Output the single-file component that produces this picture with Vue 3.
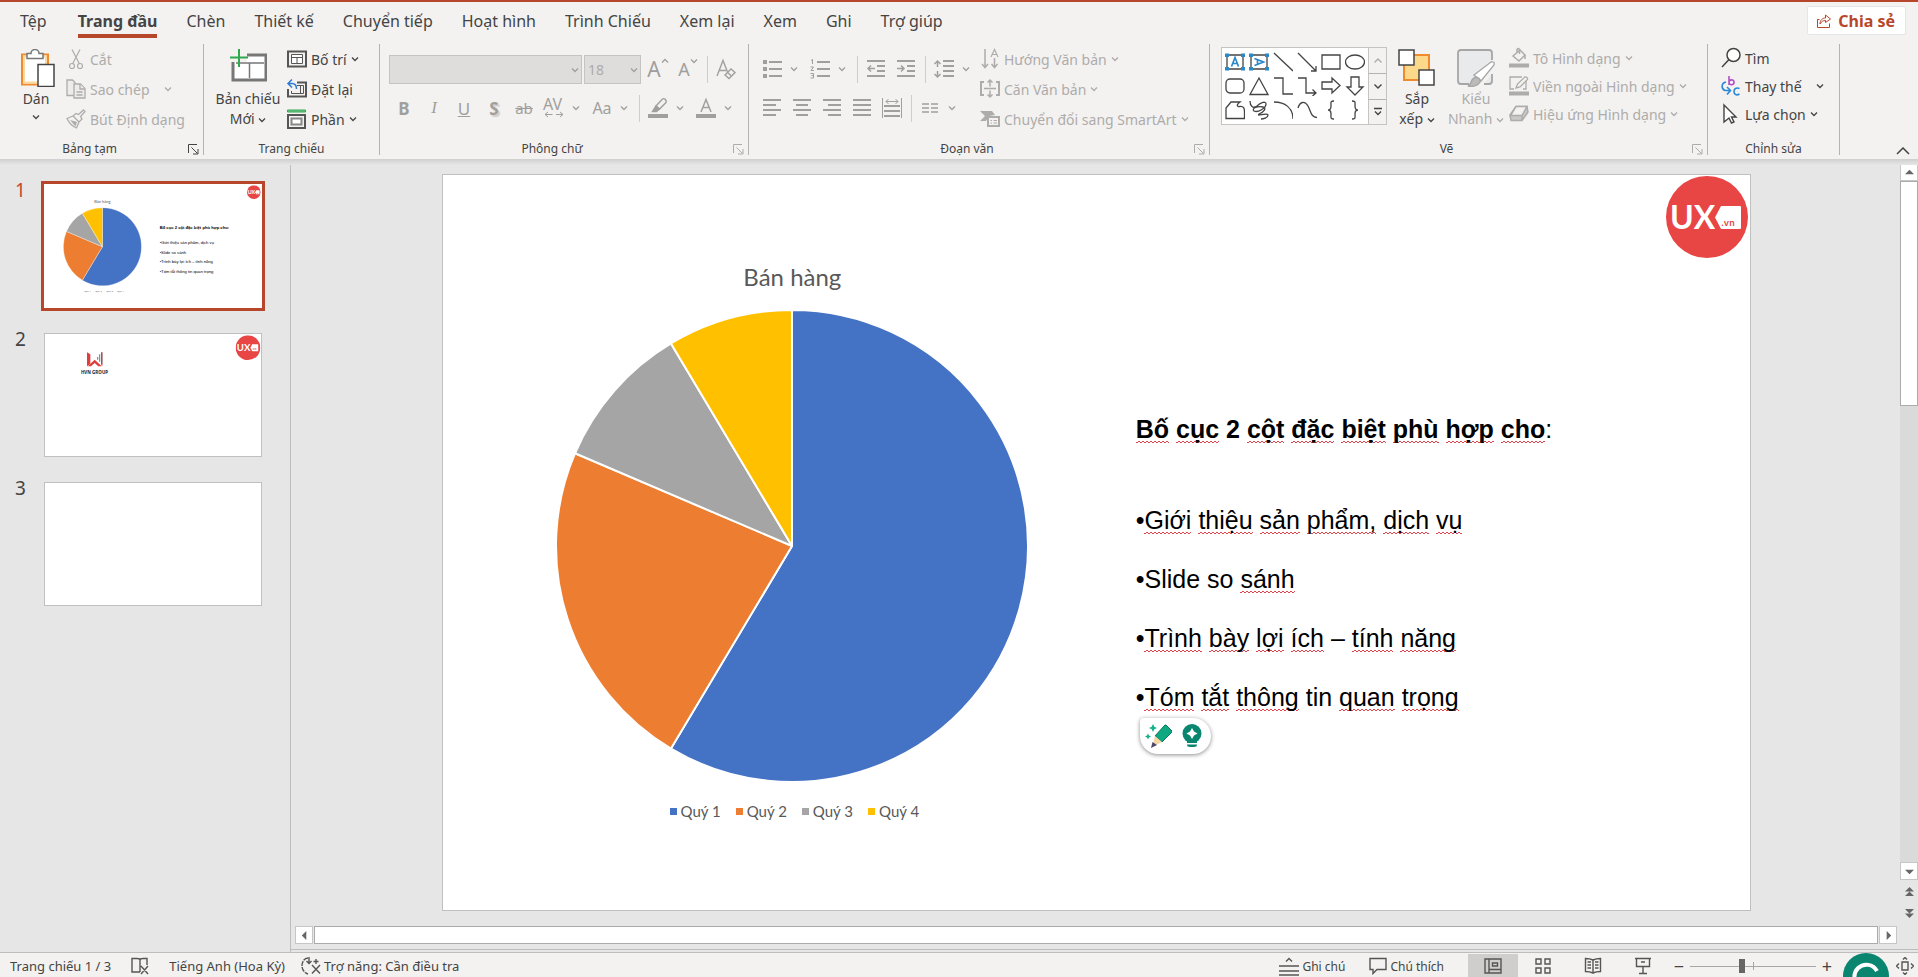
<script setup>
import { h, ref } from 'vue'

const tabs = ['Tệp', 'Trang đầu', 'Chèn', 'Thiết kế', 'Chuyển tiếp', 'Hoạt hình', 'Trình Chiếu', 'Xem lại', 'Xem', 'Ghi', 'Trợ giúp']
const activeTab = ref('Trang đầu')
const currentSlide = ref(1)
const zoom = ref(48)

// chart data
const quarters = [
  { name: 'Quý 1', value: 8.2, color: '#4472c4' },
  { name: 'Quý 2', value: 3.2, color: '#ed7d31' },
  { name: 'Quý 3', value: 1.4, color: '#a5a5a5' },
  { name: 'Quý 4', value: 1.2, color: '#ffc000' }
]

const total = quarters.reduce((sum, q) => sum + q.value, 0)
const point = (share) => {
  const angle = share * 2 * Math.PI
  return `${(236 + 235 * Math.sin(angle)).toFixed(2)} ${(236 - 235 * Math.cos(angle)).toFixed(2)}`
}

let start = 0
const slices = quarters.map((q) => {
  const end = start + q.value / total
  const large = end - start > 0.5 ? 1 : 0
  const d = `M236 236L${point(start)}A235 235 0 ${large} 1 ${point(end)}Z`
  start = end
  return { d, color: q.color }
})

// round badge used on every slide
const UxLogo = (_, { attrs }) => h('svg', { viewBox: '0 0 82 82', ...attrs }, [
  h('circle', { cx: 41, cy: 41, r: 41, fill: '#e84545' }),
  h('text', { x: 4, y: 53, 'font-family': 'Lato, sans-serif', 'font-size': 32, 'font-weight': 700, fill: '#fff' }, 'UX'),
  h('path', { d: 'M55 30H74Q75 30 75 31V52Q75 53 74 53H55L49 41.5Z', fill: '#fff' }),
  h('text', { x: 55, y: 50, 'font-family': 'Inter, sans-serif', 'font-size': 9, 'font-weight': 600, fill: '#e84545' }, '.vn')
])
UxLogo.inheritAttrs = false

// words with bad = true get the spelling mark
const heading = [
  { t: 'Bố', bad: true }, { t: 'cục', bad: true }, { t: '2' }, { t: 'cột', bad: true }, { t: 'đặc', bad: true },
  { t: 'biệt', bad: true }, { t: 'phù', bad: true }, { t: 'hợp', bad: true }, { t: 'cho', bad: true }
]
const bullets = [
  [{ t: 'Giới', bad: true }, { t: 'thiệu', bad: true }, { t: 'sản', bad: true }, { t: 'phẩm,', bad: true }, { t: 'dịch', bad: true }, { t: 'vụ', bad: true }],
  [{ t: 'Slide' }, { t: 'so' }, { t: 'sánh', bad: true }],
  [{ t: 'Trình', bad: true }, { t: 'bày', bad: true }, { t: 'lợi', bad: true }, { t: 'ích', bad: true }, { t: '–' }, { t: 'tính', bad: true }, { t: 'năng', bad: true }],
  [{ t: 'Tóm', bad: true }, { t: 'tắt', bad: true }, { t: 'thông', bad: true }, { t: 'tin' }, { t: 'quan', bad: true }, { t: 'trọng', bad: true }]
]
const plain = (words) => words.map((w) => w.t).join(' ')
</script>

<template>
  <div class="app">
    <!-- shared symbols -->
    <svg class="sprite" aria-hidden="true">
      <symbol id="chev" viewBox="0 0 8 8">
        <path d="M1 2.5L4 5.5L7 2.5" fill="none" stroke="currentColor" stroke-width="1.3" />
      </symbol>
      <symbol id="launch" viewBox="0 0 11 11">
        <path d="M.5 9V.5H9M3.5 3.5L9.5 9.5M10 5V10H5" fill="none" stroke="currentColor" />
      </symbol>
      <symbol id="pie" viewBox="0 0 472 472">
        <path v-for="s in slices" :key="s.color" :d="s.d" :fill="s.color" stroke="#fff" stroke-width="2" stroke-linejoin="round" />
      </symbol>
    </svg>

    <header class="top">
      <nav class="tabs">
        <button v-for="tab in tabs" :key="tab" class="tab" :class="{ active: tab === activeTab }" @click="activeTab = tab">
          <span>{{ tab }}</span>
        </button>
      </nav>
      <button class="share">
        <svg width="16" height="16" viewBox="0 0 16 16" fill="none" stroke="currentColor">
          <path d="M3.500 6.500H1.500V14.500H13.500V10.500M4 11C4 7 6.500 5 9.500 5V2L14.500 6L9.500 9.500V7.500C7 7.500 5.500 8.500 4 11Z" />
        </svg>
        Chia sẻ
      </button>
    </header>

    <div class="ribbon">
      <!-- clipboard -->
      <section class="group clip">
        <div class="body">
          <button class="big paste">
            <svg width="38" height="38" viewBox="0 0 38 38" fill="none">
              <path d="M5 5.500H31V35.500H5Z" fill="#fff" stroke="#ef8b2c" stroke-width="2" />
              <path d="M7 7.500H29V33.500H7Z" stroke="#fbd9a0" stroke-width="2" />
              <path d="M10 9.500V4.500H14C14 2 16 .5 18 .5S22 2 22 4.500H26V9.500Z" fill="#fff" stroke="#777" stroke-width="1.500" />
              <path d="M21 15.500H37V37.500H21Z" fill="#fff" stroke="#444" stroke-width="1.500" />
            </svg>
            <span>Dán</span>
            <svg class="chev"><use href="#chev" /></svg>
          </button>
          <div class="list">
            <button class="item off">
              <svg class="ic" viewBox="0 0 20 20" fill="none" stroke="currentColor" stroke-width="1.200">
                <path d="M6 .5L13.500 15M14 .5L6.500 15" /><circle cx="6" cy="17" r="2.500" /><circle cx="14" cy="17" r="2.500" />
              </svg>Cắt
            </button>
            <button class="item off wide">
              <svg class="ic" viewBox="0 0 20 20" fill="#ececec" stroke="currentColor" stroke-width="1.300">
                <path d="M1 1H6.500L9 3.500V16.500H1Z" /><path d="M8 5H14.500L19 9.500V19H8Z" /><path d="M14 5V10H19M10.500 13H16.500M10.500 16H16.500" />
              </svg>Sao chép
              <svg class="chev"><use href="#chev" /></svg>
            </button>
            <button class="item off">
              <svg class="ic" viewBox="0 0 20 20" fill="none" stroke="currentColor" stroke-width="1.300">
                <path d="M17.500 1L19 2.500L14.500 7.500L16 10L13 13L7 7L10 4.500L12.500 5.500ZM7 7L1 9.500C3 14 6 17 10.500 19L13 13" />
                <path d="M4 11L11 13L9.500 17.500Z" fill="currentColor" stroke="none" />
              </svg>Bút Định dạng
            </button>
          </div>
        </div>
        <footer>Bảng tạm<button class="launch" aria-label="Bảng tạm"><svg><use href="#launch" /></svg></button></footer>
      </section>

      <!-- slides -->
      <section class="group slides">
        <div class="body">
          <button class="big new">
            <svg width="38" height="38" viewBox="0 0 38 38" fill="none">
              <path d="M4 6H37V31H4Z" fill="#fff" stroke="#777" stroke-width="3" />
              <path d="M7 14H35M20.500 14V29" stroke="#777" stroke-width="1.500" />
              <path d="M0 0H18V13H0Z" fill="#f3f2f1" />
              <path d="M10 0V18M1 8.500H19" stroke="#2fa84f" stroke-width="2" />
            </svg>
            <span>Bản chiếu</span>
            <span>Mới <svg class="chev"><use href="#chev" /></svg></span>
          </button>
          <div class="list">
            <button class="item">
              <svg class="ic" viewBox="0 0 20 20" fill="none" stroke="#555">
                <path d="M1 2.500H19V17.500H1Z" stroke-width="2" /><path d="M4.500 5.500H15.500V14.500H4.500ZM4.500 8.500H15.500M10 8.500V14.500" fill="#fff" />
              </svg>Bố trí<svg class="chev"><use href="#chev" /></svg>
            </button>
            <button class="item">
              <svg class="ic" viewBox="0 0 20 20" fill="none" stroke="#555">
                <path d="M10 3.500H19V17.500H1V10" stroke-width="2" /><path d="M10 6.500H16.500V14.500H4.500V12M13.500 7V14" />
                <path d="M1 4.500H5C8 4.500 9.500 6.500 9.500 10M5 .5L1 4.500L5 8.500" stroke="#2b7cd3" stroke-width="1.500" />
              </svg>Đặt lại
            </button>
            <button class="item">
              <svg class="ic" viewBox="0 0 20 20" fill="none" stroke="#555">
                <path d="M.5 1H18.500V3H.5Z" fill="#7cc48f" stroke="#2fa84f" /><path d="M1 6H18V19H1Z" stroke-width="2" /><path d="M4.500 9.500H14.500V15.500H4.500Z" fill="#fff" stroke="#888" stroke-width="2" />
              </svg>Phần<svg class="chev"><use href="#chev" /></svg>
            </button>
          </div>
        </div>
        <footer>Trang chiếu</footer>
      </section>

      <!-- font -->
      <section class="group font">
        <div class="rows">
          <div class="row">
            <label class="combo family">
              <select disabled aria-label="Phông chữ"><option></option></select>
              <svg class="chev"><use href="#chev" /></svg>
            </label>
            <label class="combo size">
              <select disabled aria-label="Cỡ chữ"><option>18</option></select>
              <svg class="chev"><use href="#chev" /></svg>
            </label>
            <button class="tool" aria-label="Tăng cỡ chữ"><b class="grow">A</b><svg class="tick" viewBox="0 0 8 8"><path d="M1 5.500L4 2.500L7 5.500" fill="none" stroke="currentColor" stroke-width="1.300" /></svg></button>
            <button class="tool" aria-label="Giảm cỡ chữ"><b class="shrink">A</b><svg class="tick"><use href="#chev" /></svg></button>
            <i class="sep"></i>
            <button class="tool" aria-label="Xóa định dạng">
              <svg class="ic" viewBox="0 0 20 20" fill="none" stroke="currentColor" stroke-width="1.400">
                <path d="M1 17L7 1.500L11.500 13M3 11.500H10" /><path d="M9 16L15 10L19 13.500L13 19.500Z" fill="#f3f2f1" /><path d="M11.500 13.500L15.500 17" />
              </svg>
            </button>
          </div>
          <div class="row">
            <button class="tool"><b class="strong">B</b></button>
            <button class="tool"><i class="ital">I</i></button>
            <button class="tool"><u>U</u></button>
            <button class="tool"><b class="shade">S</b></button>
            <button class="tool"><s>ab</s></button>
            <button class="tool drop">
              <svg class="ic" viewBox="0 0 20 20" fill="none" stroke="currentColor">
                <text x="-1" y="12" font-family="Noto Sans, sans-serif" font-size="16" fill="currentColor" stroke="none">AV</text>
                <path d="M1 16.500H8.500M12 16.500H19M4 14L1 16.500L4 19M16 14L19 16.500L16 19" />
              </svg>
              <svg class="chev"><use href="#chev" /></svg>
            </button>
            <button class="tool drop"><span class="aa">Aa</span><svg class="chev"><use href="#chev" /></svg></button>
            <i class="sep"></i>
            <button class="tool drop" aria-label="Màu tô sáng">
              <svg class="ic" viewBox="0 0 20 20" fill="none" stroke="currentColor" stroke-width="1.400">
                <path d="M8 8L14.500 1C16 -.2 19 2 18 4.500L11.500 11Z" /><path d="M8 8L4.500 13.500H8.500L11.500 11Z" fill="currentColor" /><path d="M0 18H20" stroke-width="4" />
              </svg>
              <svg class="chev"><use href="#chev" /></svg>
            </button>
            <button class="tool drop" aria-label="Màu phông chữ">
              <svg class="ic" viewBox="0 0 20 20" fill="none" stroke="currentColor" stroke-width="1.500">
                <path d="M5 14L10 1.500L15 14M7 9.500H13" /><path d="M0 18H20" stroke-width="4" />
              </svg>
              <svg class="chev"><use href="#chev" /></svg>
            </button>
          </div>
        </div>
        <footer>Phông chữ<button class="launch off" aria-label="Phông chữ"><svg><use href="#launch" /></svg></button></footer>
      </section>

      <!-- paragraph -->
      <section class="group para">
        <div class="body">
          <div class="rows">
            <div class="row">
              <button class="tool drop" aria-label="Dấu đầu dòng">
                <svg class="ic" viewBox="0 0 20 20" stroke="currentColor"><path d="M7 3H20M7 10H20M7 17H20" stroke-width="2" /><path d="M1 3H5M1 10H5M1 17H5" stroke-width="4" /></svg>
                <svg class="chev"><use href="#chev" /></svg>
              </button>
              <button class="tool drop" aria-label="Đánh số">
                <svg class="ic" viewBox="0 0 20 20" stroke="currentColor" fill="none">
                  <path d="M7 3H20M7 10H20M7 17H20" stroke-width="2" /><path d="M1 1.500L2.500 .5V5M.5 8H3.500L1 11.500H4M.5 14.500H3.500V19H.5M1.500 16.500H3.500" />
                </svg>
                <svg class="chev"><use href="#chev" /></svg>
              </button>
              <i class="sep"></i>
              <button class="tool" aria-label="Giảm thụt lề">
                <svg class="ic" viewBox="0 0 20 20" stroke="currentColor" fill="none"><path d="M1 2H19M11 7H19M11 12H19M1 17H19" stroke-width="2" /><path d="M2 9.500H9M5 6.500L2 9.500L5 12.500" stroke-width="1.500" /></svg>
              </button>
              <button class="tool" aria-label="Tăng thụt lề">
                <svg class="ic" viewBox="0 0 20 20" stroke="currentColor" fill="none"><path d="M1 2H19M11 7H19M11 12H19M1 17H19" stroke-width="2" /><path d="M1 9.500H8M5 6.500L8 9.500L5 12.500" stroke-width="1.500" /></svg>
              </button>
              <i class="sep"></i>
              <button class="tool drop" aria-label="Giãn cách dòng">
                <svg class="ic" viewBox="0 0 20 20" stroke="currentColor" fill="none"><path d="M9 2H20M9 7H20M9 12H20M9 17H20" stroke-width="2" /><path d="M3.500 2V8M3.500 12V18M.5 5L3.500 2L6.500 5M.5 15L3.500 18L6.500 15" stroke-width="1.500" /></svg>
                <svg class="chev"><use href="#chev" /></svg>
              </button>
            </div>
            <div class="row">
              <button class="tool" aria-label="Căn trái"><svg class="ic" viewBox="0 0 20 20" stroke="currentColor" stroke-width="2"><path d="M1 2H19M1 7H14M1 12H19M1 17H14" /></svg></button>
              <button class="tool" aria-label="Căn giữa"><svg class="ic" viewBox="0 0 20 20" stroke="currentColor" stroke-width="2"><path d="M1 2H19M4 7H16M1 12H19M4 17H16" /></svg></button>
              <button class="tool" aria-label="Căn phải"><svg class="ic" viewBox="0 0 20 20" stroke="currentColor" stroke-width="2"><path d="M1 2H19M6 7H19M1 12H19M6 17H19" /></svg></button>
              <button class="tool" aria-label="Căn đều"><svg class="ic" viewBox="0 0 20 20" stroke="currentColor" stroke-width="2"><path d="M1 2H19M1 7H19M1 12H19M1 17H19" /></svg></button>
              <button class="tool" aria-label="Phân bố">
                <svg class="ic" viewBox="0 0 20 20" stroke="currentColor" fill="none"><path d="M.5 0V20M19.500 0V20" /><path d="M2 8H18M2 13H18M2 18H18" stroke-width="2" /><path d="M4 3.500H16M6.500 1L4 3.500L6.500 6M13.500 1L16 3.500L13.500 6" /></svg>
              </button>
              <i class="sep"></i>
              <button class="tool drop" aria-label="Cột">
                <svg class="ic" viewBox="0 0 20 20" stroke="currentColor" stroke-width="1.500"><path d="M2 6H9M11 6H18M2 10H9M11 10H18M2 14H9M11 14H18" /></svg>
                <svg class="chev"><use href="#chev" /></svg>
              </button>
            </div>
          </div>
          <div class="list">
            <button class="item off">
              <svg class="ic" viewBox="0 0 20 20" fill="none" stroke="currentColor" stroke-width="1.500">
                <path d="M5 0V18M2 15L5 18.500L8 15M14.500 9V18M11.500 15L14.500 18.500L17.500 15" /><path d="M11 8L14.500 .5L18 8M12 5.500H17" stroke-width="1.200" />
              </svg>Hướng Văn bản<svg class="chev"><use href="#chev" /></svg>
            </button>
            <button class="item off">
              <svg class="ic" viewBox="0 0 20 20" fill="none" stroke="currentColor" stroke-width="1.500">
                <path d="M4 3H1V16H4M16 3H19V16H16" stroke-width="2" /><path d="M4 9.500H16M10 1V7.500M10 11.500V18M7.500 3.500L10 1L12.500 3.500M7.500 15.500L10 18L12.500 15.500" />
              </svg>Căn Văn bản<svg class="chev"><use href="#chev" /></svg>
            </button>
            <button class="item off">
              <svg class="ic" viewBox="0 0 20 20" stroke="currentColor" fill="none">
                <path d="M0 2H12L15 6L9 7L6 12H0L5 7Z" fill="currentColor" stroke="none" /><path d="M8 8H19V17H8Z" fill="#f3f2f1" stroke-width="2" /><path d="M10.500 11.500H12M13.500 11.500H17M10.500 14H12M13.500 14H17" />
              </svg>Chuyển đổi sang SmartArt<svg class="chev"><use href="#chev" /></svg>
            </button>
          </div>
        </div>
        <footer>Đoạn văn<button class="launch off" aria-label="Đoạn văn"><svg><use href="#launch" /></svg></button></footer>
      </section>

      <!-- drawing -->
      <section class="group draw">
        <div class="body">
          <div class="gallery">
            <div class="shapes">
              <button aria-label="Hộp văn bản"><svg viewBox="0 0 20 20"><path d="M2 3H18V17H2Z" fill="#fff" /><path d="M0 1.500H4V5H0ZM16 1.500H20V5H16ZM0 15H4V18.500H0ZM16 15H20V18.500H16Z" fill="#2b88c9" stroke="none" /><path d="M6.500 14.500L10 5.500L13.500 14.500M8 11.500H12" stroke="#2b88c9" stroke-width="1.700" /></svg></button>
              <button aria-label="Hộp văn bản dọc"><svg viewBox="0 0 20 20"><path d="M2 3H18V17H2Z" fill="#fff" /><path d="M0 1.500H4V5H0ZM16 1.500H20V5H16ZM0 15H4V18.500H0ZM16 15H20V18.500H16Z" fill="#2b88c9" stroke="none" /><path d="M5.500 6.500L14.500 10L5.500 13.500M8.500 8V12" stroke="#2b88c9" stroke-width="1.700" /></svg></button>
              <button aria-label="Đường thẳng"><svg viewBox="0 0 20 20"><path d="M1 1L20 19" /></svg></button>
              <button aria-label="Mũi tên"><svg viewBox="0 0 20 20"><path d="M1 1L19 19M19 14V19H14" /></svg></button>
              <button aria-label="Hình chữ nhật"><svg viewBox="0 0 20 20"><path d="M1 3H19V17H1Z" /></svg></button>
              <button aria-label="Hình bầu dục"><svg viewBox="0 0 20 20"><ellipse cx="10" cy="10" rx="9.500" ry="7" /></svg></button>
              <button aria-label="Chữ nhật tròn góc"><svg viewBox="0 0 20 20"><rect x="1" y="3" width="18" height="14" rx="4" /></svg></button>
              <button aria-label="Tam giác"><svg viewBox="0 0 20 20"><path d="M10 2L19 18.500H1Z" /></svg></button>
              <button aria-label="Đường gấp khúc"><svg viewBox="0 0 20 20"><path d="M1 2H10V18H20" /></svg></button>
              <button aria-label="Mũi tên gấp khúc"><svg viewBox="0 0 20 20"><path d="M1 2H9V17H19M15.500 13.500L19 17L15.500 20" /></svg></button>
              <button aria-label="Mũi tên phải"><svg viewBox="0 0 20 20"><path d="M1 6H11V2L19 9.500L11 17V13H1Z" /></svg></button>
              <button aria-label="Mũi tên xuống"><svg viewBox="0 0 20 20"><path d="M6 1H14V11H18L10 19L2 11H6Z" /></svg></button>
              <button aria-label="Hình tự do"><svg viewBox="0 0 20 20"><path d="M6 2H15C11 5 12 7 15 6.500C19 6 19.500 9 19.500 12V18.500H1V8Z" /></svg></button>
              <button aria-label="Vẽ tay"><svg viewBox="0 0 20 20"><path d="M1 1C1 6 4 9 8 6C12 2 17 1 17 4C17 8 9 13 5 11C2 8 9 6 14 7C18 8 15 12 10 14C7 17 18 12 19 15C19 18 14 19 12 19" /></svg></button>
              <button aria-label="Cung"><svg viewBox="0 0 20 20"><path d="M1 2C12 2 20 8 20 19" /></svg></button>
              <button aria-label="Đường cong"><svg viewBox="0 0 20 20"><path d="M1 8C3 1 8 1 11 6C14 12 14 17 20 17.500" /></svg></button>
              <button aria-label="Ngoặc nhọn trái"><svg viewBox="0 0 20 20"><path d="M13 1C9 1 10 3 10 6C10 9 9 10 7 10C9 10 10 11 10 14C10 17 9 19 13 19" /></svg></button>
              <button aria-label="Ngoặc nhọn phải"><svg viewBox="0 0 20 20"><path d="M7 1C11 1 10 3 10 6C10 9 11 10 13 10C11 10 10 11 10 14C10 17 11 19 7 19" /></svg></button>
            </div>
            <div class="pager">
              <button class="off" aria-label="Lên"><svg viewBox="0 0 10 10"><path d="M1.500 6.500L5 3L8.500 6.500" /></svg></button>
              <button aria-label="Xuống"><svg viewBox="0 0 10 10"><path d="M1.500 3.500L5 7L8.500 3.500" /></svg></button>
              <button aria-label="Thêm"><svg viewBox="0 0 10 10"><path d="M1 1.500H9M2 4.500L5 7.500L8 4.500" /></svg></button>
            </div>
          </div>
          <button class="big arrange">
            <svg width="38" height="38" viewBox="0 0 38 38" fill="none" stroke-width="1.500">
              <path d="M6 6H31V31H6Z" fill="#fcd98a" stroke="#ef8b2c" stroke-width="2" /><path d="M1 1H16V16H1Z" fill="#fff" stroke="#444" /><path d="M21 21H36V36H21Z" fill="#fff" stroke="#444" />
            </svg>
            <span>Sắp</span>
            <span>xếp <svg class="chev"><use href="#chev" /></svg></span>
          </button>
          <button class="big quick off">
            <svg width="40" height="38" viewBox="0 0 40 38" fill="none" stroke="#a6a6a6">
              <path d="M13 35H5Q2 35 2 32V4Q2 1 5 1H33Q36 1 36 4V11M36 25V32Q36 35 33 35H28" fill="#e9eaeb" stroke-width="1.800" />
              <path d="M18 26L35 13Q39 12 38 16L25 32Z" fill="#fff" stroke-width="1.300" /><path d="M12 37C16 36 14 31 18 29C21 27 25 30 24 33C22 37 16 38 12 37Z" fill="#bbb" stroke-width="1.500" />
            </svg>
            <span>Kiểu</span>
            <span>Nhanh <svg class="chev"><use href="#chev" /></svg></span>
          </button>
          <div class="list tight">
            <button class="item off">
              <svg class="ic" viewBox="0 0 20 20" fill="none" stroke="currentColor" stroke-width="1.500"><path d="M4 8L11 2L16 7L10 13Z" /><path d="M8 5V1.500Q9 -.5 10.500 1.500V6M16 7V11" /><path d="M0 17.500H20" stroke-width="4" /></svg>
              Tô Hình dạng<svg class="chev"><use href="#chev" /></svg>
            </button>
            <button class="item off">
              <svg class="ic" viewBox="0 0 20 20" fill="none" stroke="currentColor" stroke-width="1.300"><path d="M13 1H1V13H5M17 5V13H14" /><path d="M7 12L8.500 8L16 .8Q19 1 18.500 3.500L11 11Z" /><path d="M0 17.500H20" stroke-width="4" /></svg>
              Viền ngoài Hình dạng<svg class="chev"><use href="#chev" /></svg>
            </button>
            <button class="item off">
              <svg class="ic" viewBox="0 0 20 20" fill="#c9c9c9" stroke="currentColor" stroke-width="1.500"><path d="M1 11L7 2.500H18L19 8L13 16.500H2Z" /><path d="M7 2.500H18L13 11.500H1.500Z" fill="#f3f2f1" /><path d="M13 11.500V16" /></svg>
              Hiệu ứng Hình dạng<svg class="chev"><use href="#chev" /></svg>
            </button>
          </div>
        </div>
        <footer>Vẽ<button class="launch off" aria-label="Vẽ"><svg><use href="#launch" /></svg></button></footer>
      </section>

      <!-- editing -->
      <section class="group edit">
        <div class="body">
          <div class="list tight">
            <button class="item">
              <svg class="ic" viewBox="0 0 20 20" fill="none" stroke="#444" stroke-width="1.500"><circle cx="12.500" cy="7" r="6.500" fill="#fff" /><path d="M8 11.500L1 19" /></svg>
              Tìm
            </button>
            <button class="item">
              <svg class="ic" viewBox="0 0 20 20" fill="none" stroke-width="1.600"><path d="M8 0V9M8 6.500C8 3 13 3 13 6.200S8 9.500 8 6.500" stroke="#b14fc5" /><path d="M18.500 12.500C15 11 13 13 13 15.500S15 20 18.500 18M5 6C0 7 0 13 4 14.500H9M6 11L9.500 14.500L6 18.500" stroke="#2b88d8" /></svg>
              Thay thế <svg class="chev far"><use href="#chev" /></svg>
            </button>
            <button class="item">
              <svg class="ic" viewBox="0 0 20 20" fill="#fff" stroke="#444" stroke-width="1.400"><path d="M3 1L15 13H10.500L13 18L10.500 19L8 14L3 18Z" /></svg>
              Lựa chọn<svg class="chev"><use href="#chev" /></svg>
            </button>
          </div>
        </div>
        <footer>Chỉnh sửa</footer>
      </section>
      <button class="collapse" aria-label="Thu gọn dải băng"><svg viewBox="0 0 14 8"><path d="M1 7L7 1L13 7" fill="none" stroke="currentColor" stroke-width="1.500" /></svg></button>
    </div>

    <main class="main">
      <aside class="thumbs">
        <button v-for="n in 3" :key="n" class="thumb" :class="{ current: n === currentSlide }" @click="currentSlide = n">
          <span class="num">{{ n }}</span>
          <svg class="mini" viewBox="0 0 1308 736">
            <g v-if="n === 1">
              <text x="350" y="112" text-anchor="middle" font-family="Lato, sans-serif" font-size="24" fill="#555">Bán hàng</text>
              <use href="#pie" x="115" y="137" width="471" height="471" />
              <text v-for="(q, i) in quarters" :key="q.name" :x="241 + i * 66" y="642" font-family="Lato, sans-serif" font-size="15" fill="#555">{{ q.name }}</text>
              <text x="694" y="264" font-family="Liberation Sans, sans-serif" font-size="25" font-weight="700">{{ plain(heading) }}:</text>
              <text v-for="(line, i) in bullets" :key="i" x="694" :y="355 + i * 59" font-family="Liberation Sans, sans-serif" font-size="25">•{{ plain(line) }}</text>
              <UxLogo x="1218" y="4" width="82" height="82" />
            </g>
            <g v-if="n === 2">
              <path d="M258 112L278 124V180L258 196ZM344 112L350 112V196L344 190Z" fill="#e23b3b" />
              <path d="M262 196L304 156L346 196H326L304 176L282 196Z" fill="#e23b3b" />
              <path d="M344 112H350V184H344ZM332 124H337V168H332ZM320 140H325V156H320Z" fill="#555" />
              <text x="303" y="242" text-anchor="middle" font-family="Open Sans, sans-serif" font-size="27" font-weight="700" fill="#222">HVN GROUP</text>
              <UxLogo x="1150" y="10" width="148" height="148" />
            </g>
          </svg>
        </button>
      </aside>

      <div class="work">
        <div class="stage">
          <article class="slide">
            <UxLogo class="logo" />
            <section class="chart">
              <h2>Bán hàng</h2>
              <svg class="pie" viewBox="0 0 472 472"><use href="#pie" /></svg>
              <ul class="legend">
                <li v-for="q in quarters" :key="q.name"><i :style="{ background: q.color }"></i>{{ q.name }}</li>
              </ul>
            </section>
            <section class="copy">
              <h3><template v-for="(w, i) in heading" :key="i"><span :class="{ bad: w.bad }">{{ w.t }}</span>{{ i < heading.length - 1 ? ' ' : '' }}</template><span class="colon">:</span></h3>
              <ul>
                <li v-for="(line, i) in bullets" :key="i">•<template v-for="(w, j) in line" :key="j"><span :class="{ bad: w.bad }">{{ w.t }}</span>{{ ' ' }}</template></li>
              </ul>
              <div class="assist">
                <button aria-label="Viết lại">
                  <svg width="28" height="26" viewBox="0 0 28 26">
                    <path d="M9 1L10.300 3.700L13 5L10.300 6.300L9 9L7.700 6.300L5 5L7.700 3.700ZM4 10.500L5 12.500L7 13.500L5 14.500L4 16.500L3 14.500L1 13.500L3 12.500Z" fill="#16b18c" />
                    <path d="M22 2L28 8Q28 9 27 10L18 19L11 13L20 3Q21 1.500 22 2Z" fill="#0ea882" stroke="#087a61" />
                    <path d="M11 13L18 19L8 24Z" fill="#f6d7a6" /><path d="M8.500 19L13 22L7 25Z" fill="#4a4a68" />
                  </svg>
                </button>
                <button aria-label="Gợi ý">
                  <svg width="20" height="24" viewBox="0 0 20 24">
                    <circle cx="10" cy="9.500" r="9.500" fill="#0a8670" /><path d="M5 15H15V19H5ZM5 20.500H15Q15 23 12 23H8Q5 23 5 20.500Z" fill="#0a8670" /><path d="M10 4L12 7.500L15.500 9.500L12 11.500L10 15L8 11.500L4.500 9.500L8 7.500Z" fill="#fff" />
                  </svg>
                </button>
              </div>
            </section>
          </article>
          <div class="hscroll">
            <button aria-label="Cuộn trái"><svg viewBox="0 0 10 10"><path d="M7 0V10L2 5Z" /></svg></button>
            <div class="hthumb"></div>
            <button aria-label="Cuộn phải"><svg viewBox="0 0 10 10"><path d="M3 0V10L8 5Z" /></svg></button>
          </div>
        </div>
        <div class="vscroll">
          <button aria-label="Cuộn lên"><svg viewBox="0 0 10 10"><path d="M0 7H10L5 2Z" /></svg></button>
          <div class="vtrack"><div class="vthumb"></div></div>
          <button aria-label="Cuộn xuống"><svg viewBox="0 0 10 10"><path d="M0 3H10L5 8Z" /></svg></button>
          <button class="page" aria-label="Trang trước"><svg viewBox="0 0 10 10"><path d="M0 5H10L5 0ZM0 10H10L5 5Z" /></svg></button>
          <button class="page" aria-label="Trang sau"><svg viewBox="0 0 10 10"><path d="M0 0H10L5 5ZM0 5H10L5 10Z" /></svg></button>
        </div>
      </div>
    </main>

    <footer class="status">
      <div class="left">
        <span>Trang chiếu {{ currentSlide }} / 3</span>
        <button class="stat spell" aria-label="Soát lỗi">
          <svg width="18" height="18" viewBox="0 0 18 18"><path d="M9 3V14M9 15H1V1.500H6Q9 1.500 9 3Q9 1.500 12 1.500H16V8M9 15V13M10 9L17 17M17 9L10 17" /></svg>
        </button>
        <span>Tiếng Anh (Hoa Kỳ)</span>
        <button class="stat access">
          <svg width="20" height="18" viewBox="0 0 20 18"><path d="M7 1C3 1 1 5 1 9S4 16 7 17" stroke-dasharray="5 1" /><path d="M8 0V6M5.500 4L8 6.500L10.500 4M11 8L19 16.500M19 8L11 16.500M15 2V7M12.500 4.500H17.500" /></svg>
          Trợ năng: Cần điều tra
        </button>
      </div>
      <div class="right">
        <button class="stat">
          <svg width="20" height="20" viewBox="0 0 20 20"><path d="M7 5.500L10 2.500L13 5.500M0 10H20M0 15H20M0 19H20" /></svg>Ghi chú
        </button>
        <button class="stat comment">
          <svg width="18" height="18" viewBox="0 0 18 18"><path d="M1 1.500H17V12.500H8L4 16.500V12.500H1Z" /></svg>Chú thích
        </button>
        <button class="view on" aria-label="Thường"><svg viewBox="0 0 18 18"><path d="M1 2H17V16H1ZM5 2V16M5 12.500H17M8.500 6H13.500V9H8.500Z" /></svg></button>
        <button class="view" aria-label="Sắp xếp trang chiếu"><svg viewBox="0 0 18 18"><path d="M2 2H7V7H2ZM11 2H16V7H11ZM2 11H7V16H2ZM11 11H16V16H11Z" /></svg></button>
        <button class="view" aria-label="Dạng xem đọc"><svg viewBox="0 0 18 18"><path d="M9 3Q6 1.500 1.500 1.500V14.500Q6 14.500 9 16Q12 14.500 16.500 14.500V1.500Q12 1.500 9 3V16M3.500 5H7M3.500 8H7M3.500 11H7M11 5H14.500M11 8H14.500M11 11H14.500" /></svg></button>
        <button class="view" aria-label="Trình chiếu"><svg viewBox="0 0 18 18"><path d="M1 1.500H17M2.500 1.500V9.500H15.500V1.500M9 9.500V16.500M5 16.500H13M7 5H11" /></svg></button>
        <button class="step" aria-label="Thu nhỏ">−</button>
        <input v-model="zoom" class="zoom" type="range" min="0" max="118" aria-label="Thu phóng" />
        <button class="step" aria-label="Phóng to">+</button>
        <button class="fit" aria-label="Vừa cửa sổ"><svg viewBox="0 0 18 18"><path d="M6 5H12V13H6ZM7 2.500L9 .5L11 2.500M7 15.500L9 17.500L11 15.500M3 6.500L.5 9L3 11.500M15 6.500L17.500 9L15 11.500" /></svg></button>
      </div>
      <button class="helper" aria-label="Grammarly">
        <svg viewBox="0 0 46 46"><circle cx="23" cy="23" r="23" fill="#0a8670" /><path d="M34 18A12 12 0 1 0 35 27M35 27H26M35 27V36" fill="none" stroke="#fff" stroke-width="4" /></svg>
      </button>
    </footer>
  </div>
</template>

<style>
body {
  overflow: hidden;
}
</style>

<style scoped>
.app {
  display: flex;
  flex-direction: column;
  height: 100vh;
  overflow: hidden;
  box-sizing: border-box;
  border-top: 2px solid #b7472a;
  background: #f3f2f1;
  color: #444;
  font-family: "Noto Sans", sans-serif;
  font-size: 14px;
}

.app *,
.app *::before {
  box-sizing: border-box;
}

.sprite {
  position: absolute;
  width: 0;
  height: 0;
}

button {
  padding: 0;
  border: 0;
  background: none;
  color: inherit;
  font: inherit;
}

svg {
  flex: none;
}

.chev {
  width: 8px;
  height: 8px;
}

/* tab strip */
.top {
  display: flex;
  justify-content: space-between;
  align-items: flex-start;
  height: 42px;
  padding: 0 12px 0 6px;
}

.tabs {
  display: flex;
  gap: 1px;
}

.tab {
  padding: 6px 14px 0;
  font-size: 16px;
  line-height: 26px;
}

.tab:first-child {
  margin-right: 2px;
}

.tab span {
  display: block;
  border-bottom: 4px solid transparent;
}

.tab.active {
  font-weight: 700;
}

.tab.active span {
  border-color: #b7472a;
}

.share {
  display: flex;
  align-items: center;
  gap: 6px;
  height: 29px;
  margin-top: 4px;
  padding: 0 10px 0 8px;
  border: 1px solid #e8e6e4;
  border-radius: 2px;
  background: #fff;
  color: #b7472a;
  font-size: 16px;
  font-weight: 700;
}

/* ribbon */
.ribbon {
  display: grid;
  grid-template-columns: 204px 176px 369px 461px 498px 132px 1fr;
  height: 115px;
  padding-bottom: 4px;
}

.group {
  display: flex;
  flex-direction: column;
  justify-content: space-between;
  border-right: 1px solid #b5b3b1;
}

.group footer {
  position: relative;
  padding-right: 24px;
  font-size: 12px;
  line-height: 12px;
  text-align: center;
}

.group.slides footer,
.group.edit footer {
  padding-right: 0;
}

.body {
  display: flex;
  align-items: flex-start;
}

.launch {
  position: absolute;
  right: 4px;
  top: 1px;
  width: 11px;
  height: 11px;
}

.launch svg {
  display: block;
  width: 11px;
  height: 11px;
}

.off {
  color: #aeacaa;
}

.big {
  display: flex;
  flex-direction: column;
  align-items: center;
  padding-top: 5px;
  line-height: 20px;
  white-space: nowrap;
}

.big > svg:first-child {
  margin-bottom: 2px;
}

.big > .chev {
  margin-top: 4px;
}

.clip .body {
  gap: 8px;
  padding-left: 14px;
}

.paste {
  width: 44px;
}

.slides .body {
  gap: 3px;
  padding-left: 8px;
}

.new {
  width: 72px;
}

.list {
  display: flex;
  flex-direction: column;
  align-items: flex-start;
}

.item {
  display: flex;
  align-items: center;
  gap: 4px;
  height: 30px;
  white-space: nowrap;
}

.tight .item {
  height: 28px;
}

.ic {
  display: block;
  width: 20px;
  height: 20px;
  overflow: visible;
}

.wide .chev,
.far {
  margin-left: 10px;
}

.rows {
  display: flex;
  flex-direction: column;
  gap: 9px;
  padding: 10px 0 0 9px;
}

.row {
  display: flex;
  align-items: center;
  height: 30px;
  color: #a19f9d;
}

.tool {
  display: flex;
  align-items: center;
  justify-content: center;
  width: 30px;
  height: 30px;
  font-size: 17px;
}

.tool b {
  font-weight: 400;
}

.tool .strong,
.tool .shade {
  font-weight: 700;
}

.tool .shade {
  text-shadow: 2px 2px 1px #d0cecc;
}

.ital {
  font-family: "Liberation Serif", serif;
}

.tool s {
  font-size: 15px;
}

.tool.drop {
  justify-content: flex-start;
  gap: 8px;
  width: 48px;
  padding-left: 5px;
}

.aa {
  width: 20px;
  font-size: 16px;
}

.tool .grow {
  font-size: 21px;
}

.tool .shrink {
  font-size: 18px;
}

.tick {
  align-self: flex-start;
  width: 8px;
  height: 8px;
  margin-top: 3px;
}

.sep {
  width: 8px;
  height: 27px;
  background: linear-gradient(#cfcdcb, #cfcdcb) center / 1px 100% no-repeat;
}

.combo {
  position: relative;
  height: 29px;
  margin-right: 2px;
}

.family {
  width: 193px;
}

.size {
  width: 57px;
}

.combo select {
  width: 100%;
  height: 100%;
  padding: 0 3px;
  border: 1px solid #c6c4c2;
  border-radius: 0;
  background: #dedddc;
  color: #aeacaa;
  font: inherit;
  appearance: none;
  opacity: 1;
}

.combo .chev {
  position: absolute;
  right: 3px;
  top: 11px;
}

.para .rows {
  width: 231px;
  padding-left: 8px;
}

.draw .body {
  gap: 4px;
  padding-left: 11px;
}

.gallery {
  display: flex;
  margin-top: 3px;
  border: 1px solid #c6c4c2;
  background: #fff;
}

.shapes {
  display: grid;
  grid-template-columns: repeat(6, 24px);
  grid-auto-rows: 24px;
  padding: 2px 1px;
}

.shapes button {
  display: grid;
  place-items: center;
}

.shapes svg {
  width: 20px;
  height: 20px;
  fill: none;
  stroke: #444;
  stroke-width: 1.3;
}

.pager {
  display: grid;
  grid-template-rows: repeat(3, 1fr);
  width: 18px;
}

.pager button {
  display: grid;
  place-items: center;
  border-left: 1px solid #c6c4c2;
  background: #f3f2f1;
}

.pager button + button {
  border-top: 1px solid #b5b3b1;
}

.pager svg {
  width: 10px;
  height: 10px;
  fill: none;
  stroke: currentColor;
  stroke-width: 1.4;
}

.arrange {
  width: 52px;
}

.quick {
  width: 58px;
}

.edit .body {
  padding-left: 13px;
}

.collapse {
  justify-self: end;
  align-self: end;
  width: 14px;
  height: 8px;
  margin-right: 8px;
}

.collapse svg {
  display: block;
}

/* work area */
.main {
  position: relative;
  display: flex;
  flex: 1;
  min-height: 0;
  background: #e6e6e6;
}

.main::before {
  position: absolute;
  inset: 0 0 auto;
  height: 6px;
  background: linear-gradient(#cfcfcf, #e6e6e6);
  content: "";
}

.thumbs {
  display: flex;
  flex-direction: column;
  gap: 25px;
  width: 291px;
  padding: 25px 28px 0 15px;
  border-right: 1px solid #bdbdbd;
}

.thumb {
  display: flex;
  align-items: flex-start;
  justify-content: space-between;
}

.num {
  font-size: 19px;
  line-height: 12px;
}

.current .num {
  color: #c8472c;
}

.mini {
  width: 218px;
  aspect-ratio: 218 / 124;
  background: #fff;
  outline: 1px solid #c0c0c0;
  outline-offset: -1px;
}

.current .mini {
  outline: 3px solid #b7472a;
  outline-offset: 0;
}

.work {
  display: flex;
  flex: 1;
  margin-bottom: 2px;
  border-bottom: 1px solid #bdbdbd;
}

.stage {
  display: flex;
  flex: 1;
  flex-direction: column;
  justify-content: space-between;
  padding: 15px 3px 5px 4px;
}

.slide {
  position: relative;
  display: grid;
  grid-template-columns: 53% 1fr;
  margin: 0 146px 0 147px;
  min-height: 737px;
  border: 1px solid #c0c0c0;
  background: #fff;
}

.logo {
  position: absolute;
  top: 1px;
  right: 2px;
  width: 82px;
  height: 82px;
}

.chart {
  display: flex;
  flex-direction: column;
  align-items: center;
  padding: 87px 0 0 6px;
  color: #595959;
  font-family: Lato, sans-serif;
}

.chart h2 {
  margin: 0 0 17px;
  font-size: 24px;
  font-weight: 400;
  line-height: 30px;
}

.pie {
  width: 474px;
  max-width: 100%;
  aspect-ratio: 1;
}

.legend {
  display: flex;
  gap: 15px;
  margin: 18px 0 0;
  padding: 0 0 0 4px;
  font-size: 15px;
  line-height: 20px;
  list-style: none;
}

.legend li {
  display: flex;
  align-items: center;
  gap: 4px;
}

.legend i {
  width: 7px;
  height: 7px;
}

.copy {
  padding-top: 239px;
  color: #000;
  font-family: "Liberation Sans", sans-serif;
  font-size: 25px;
  line-height: 30px;
}

.copy h3 {
  margin: 0 0 61px;
  font-size: 25px;
  line-height: 30px;
}

.colon {
  font-weight: 400;
}

.copy ul {
  display: flex;
  flex-direction: column;
  gap: 29px;
  margin: 0;
  padding: 0;
  list-style: none;
}

.bad {
  background:
    linear-gradient(90deg, #e0434a 50%, transparent 50%) 0 100% / 4px 1px repeat-x,
    linear-gradient(90deg, transparent 50%, #e0434a 50%) 0 calc(100% - 1px) / 4px 1px repeat-x;
}

.assist {
  display: flex;
  align-items: center;
  gap: 10px;
  width: 71px;
  height: 36px;
  margin: 6px 0 0 4px;
  padding-left: 4px;
  border-radius: 4px 18px 18px 18px;
  background: #fff;
  box-shadow: 0 1px 4px rgba(0, 0, 0, 0.45);
}

.assist svg {
  display: block;
}

.hscroll {
  display: flex;
  gap: 1px;
  height: 18px;
}

.hscroll button,
.vscroll button {
  display: grid;
  place-items: center;
  width: 18px;
  height: 18px;
  border: 1px solid #c6c6c6;
  background: #fff;
}

.hscroll svg,
.vscroll svg {
  width: 9px;
  height: 9px;
  fill: #666;
}

.hthumb {
  flex: 1;
  border: 1px solid #ababab;
  background: #fff;
}

.vscroll {
  display: flex;
  flex-direction: column;
  width: 18px;
  padding: 4px 0 25px;
}

.vtrack {
  flex: 1;
  background: #dadada;
}

.vthumb {
  height: 33%;
  border: 1px solid #ababab;
  background: #fff;
}

.vscroll .page {
  height: 22px;
  border: 0;
  background: none;
}

/* status bar */
.status {
  position: relative;
  display: flex;
  align-items: center;
  justify-content: space-between;
  height: 25px;
  padding: 2px 4px 0 10px;
  border-top: 1px solid #bdbdbd;
  font-size: 12px;
  white-space: nowrap;
}

.status svg {
  fill: none;
  stroke: #555;
  stroke-width: 1.4;
}

.left,
.right {
  display: flex;
  align-items: center;
}

.left {
  font-size: 13px;
}

.stat {
  display: flex;
  align-items: center;
  gap: 3px;
}

.spell {
  margin: 0 20px;
}

.access {
  margin-left: 16px;
}

.comment {
  margin: 0 24px;
}

.view {
  display: grid;
  place-items: center;
  width: 50px;
  height: 24px;
}

.view.on {
  background: #d0cecc;
}

.view svg,
.fit svg {
  display: block;
  width: 18px;
  height: 18px;
}

.step {
  width: 22px;
  font-size: 18px;
  line-height: 20px;
}

.zoom {
  width: 126px;
  height: 16px;
  margin: 0;
  background: linear-gradient(#a6a6a6, #a6a6a6) center / 100% 1px no-repeat, linear-gradient(#a6a6a6, #a6a6a6) center / 1px 8px no-repeat;
  appearance: none;
}

.zoom::-webkit-slider-thumb {
  width: 6px;
  height: 14px;
  background: #666;
  appearance: none;
}

.fit {
  margin-left: 58px;
}

.helper {
  position: absolute;
  right: 29px;
  top: 0;
  width: 46px;
  height: 46px;
}

.status .helper svg {
  display: block;
  width: 46px;
  height: 46px;
  stroke: none;
}
</style>
